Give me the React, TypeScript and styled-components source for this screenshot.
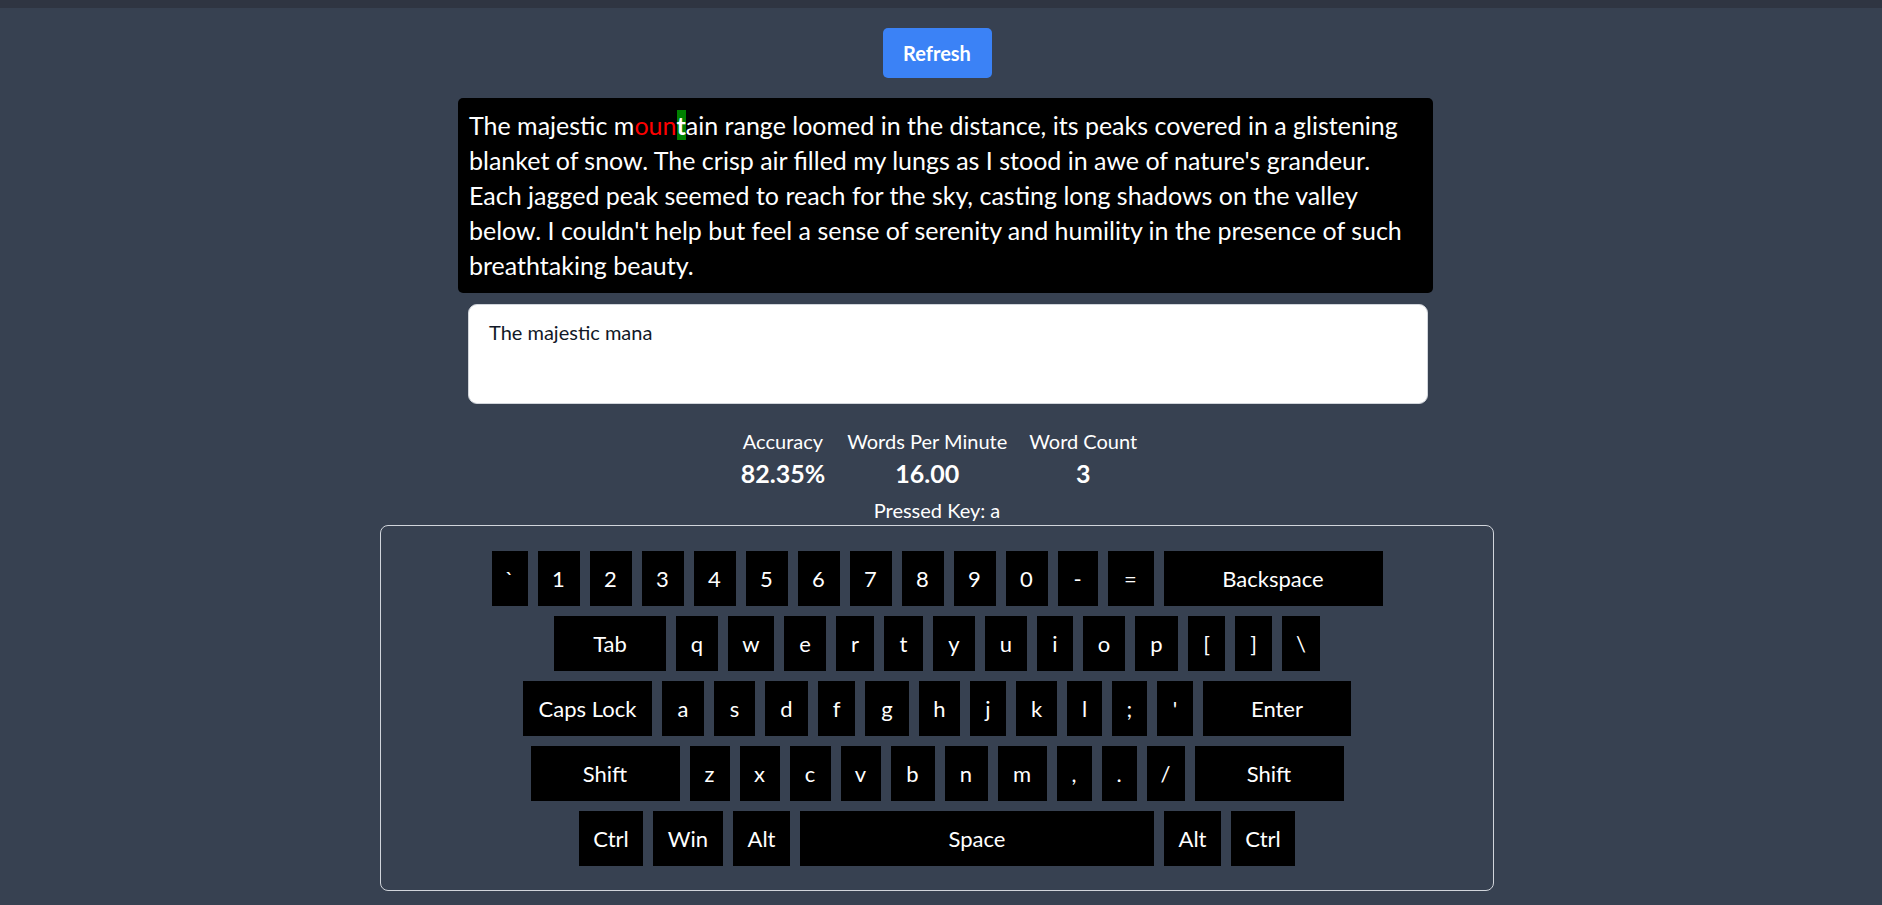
import React from "react";
import styled, { createGlobalStyle } from "styled-components";

const GlobalStyle = createGlobalStyle`
  html, body {
    margin: 0;
    padding: 0;
    background: #374151;
    font-family: "Lato", "Open Sans", "Noto Sans", sans-serif;
  }
  * { box-sizing: border-box; }
`;

const TopBar = styled.div`
  height: 8px;
  background: #2f3542;
`;

const Page = styled.main`
  display: flex;
  flex-direction: column;
  align-items: center;
  padding: 20px 8px 0 0;
`;

const RefreshButton = styled.button`
  width: 109px;
  height: 50px;
  border: none;
  border-radius: 5px;
  background: #3b82f6;
  color: #ffffff;
  font-family: inherit;
  font-size: 20px;
  font-weight: 700;
  cursor: pointer;
`;

const Passage = styled.div`
  width: 975px;
  margin: 20px 0 0 17px;
  padding: 10px 10px 10px 11px;
  background: #000000;
  border-radius: 5px;
  color: #ffffff;
  font-size: 25px;
  line-height: 35px;
`;

const Wrong = styled.span`
  color: #ff0000;
`;

const Cursor = styled.span`
  background: #008000;
  font-weight: 700;
`;

const TypingArea = styled.textarea`
  display: block;
  width: 960px;
  height: 100px;
  margin: 11px 0 0 22px;
  padding: 12px 20px;
  border: 1px solid #d1d5db;
  border-radius: 9px;
  background: #ffffff;
  color: #111827;
  font-family: inherit;
  font-size: 20px;
  line-height: 30px;
  resize: none;
  outline: none;
`;

const Stats = styled.section`
  display: flex;
  gap: 22px;
  margin: 22px 0 0 4px;
  color: #ffffff;
`;

const Stat = styled.div`
  display: flex;
  flex-direction: column;
  align-items: center;
`;

const StatLabel = styled.span`
  font-size: 20px;
  line-height: 30px;
`;

const StatValue = styled.span`
  font-size: 25px;
  line-height: 35px;
  font-weight: 700;
`;

const PressedKey = styled.div`
  margin-top: 4px;
  color: #ffffff;
  font-size: 20px;
  line-height: 30px;
`;

const Keyboard = styled.section`
  width: 1114px;
  display: flex;
  flex-direction: column;
  gap: 10px;
  padding: 25px 0 24px;
  border: 1px solid #d1d5db;
  border-radius: 8px;
`;

const KeyRow = styled.div`
  display: flex;
  justify-content: center;
  gap: 10px;
`;

const Key = styled.div<{ $w: number }>`
  width: ${(p) => p.$w}px;
  height: 55px;
  display: flex;
  align-items: center;
  justify-content: center;
  background: #000000;
  color: #ffffff;
  font-size: 22px;
  line-height: 30px;
`;

type K = [string, number];

const rows: K[][] = [
  [
    ["`", 36], ["1", 42], ["2", 42], ["3", 42], ["4", 42], ["5", 42], ["6", 42],
    ["7", 42], ["8", 42], ["9", 42], ["0", 42], ["-", 40], ["=", 46], ["Backspace", 219],
  ],
  [
    ["Tab", 112], ["q", 42], ["w", 46], ["e", 42], ["r", 38], ["t", 39], ["y", 42],
    ["u", 42], ["i", 36], ["o", 42], ["p", 43], ["[", 37], ["]", 37], ["\\", 38],
  ],
  [
    ["Caps Lock", 129], ["a", 42], ["s", 41], ["d", 43], ["f", 37], ["g", 44], ["h", 41],
    ["j", 36], ["k", 41], ["l", 35], [";", 35], ["'", 36], ["Enter", 148],
  ],
  [
    ["Shift", 149], ["z", 40], ["x", 40], ["c", 41], ["v", 40], ["b", 44], ["n", 43],
    ["m", 49], [",", 35], [".", 35], ["/", 38], ["Shift", 149],
  ],
  [
    ["Ctrl", 64], ["Win", 70], ["Alt", 57], ["Space", 354], ["Alt", 57], ["Ctrl", 64],
  ],
];

const stats = [
  { label: "Accuracy", value: "82.35%" },
  { label: "Words Per Minute", value: "16.00" },
  { label: "Word Count", value: "3" },
];

export default function App() {
  return (
    <>
      <GlobalStyle />
      <TopBar />
      <Page>
        <RefreshButton>Refresh</RefreshButton>
        <Passage>
          The majestic m<Wrong>oun</Wrong>
          <Cursor>t</Cursor>ain range loomed in the distance, its peaks covered in a glistening
          blanket of snow. The crisp air filled my lungs as I stood in awe of nature's grandeur.
          Each jagged peak seemed to reach for the sky, casting long shadows on the valley below.
          I couldn't help but feel a sense of serenity and humility in the presence of such
          breathtaking beauty.
        </Passage>
        <TypingArea defaultValue="The majestic mana" />
        <Stats>
          {stats.map((s) => (
            <Stat key={s.label}>
              <StatLabel>{s.label}</StatLabel>
              <StatValue>{s.value}</StatValue>
            </Stat>
          ))}
        </Stats>
        <PressedKey>Pressed Key: a</PressedKey>
        <Keyboard>
          {rows.map((row, i) => (
            <KeyRow key={i}>
              {row.map(([label, w], j) => (
                <Key key={j} $w={w}>
                  {label}
                </Key>
              ))}
            </KeyRow>
          ))}
        </Keyboard>
      </Page>
    </>
  );
}
